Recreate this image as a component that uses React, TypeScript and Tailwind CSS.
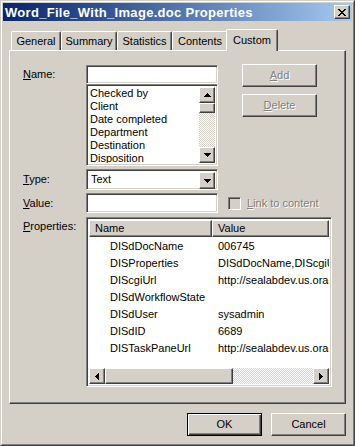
import React from 'react';

// Classic Windows bevels, written out in full so Tailwind picks them up.
const raised =
  'border border-t-white border-l-white border-r-[#404040] border-b-[#404040] shadow-[inset_-1px_-1px_#808080]';
const sunken =
  'border border-t-[#808080] border-l-[#808080] border-r-white border-b-white shadow-[inset_1px_1px_#404040,inset_-1px_-1px_#d4d0c8]';
const checker =
  'bg-[repeating-conic-gradient(#ffffff_0_25%,#d4d0c8_0_50%)] [background-size:2px_2px]';
const disabledText = 'text-[#808080] [text-shadow:1px_1px_0_#ffffff]';

const arrows: Record<string, { w: number; h: number; d: string }> = {
  up: { w: 7, h: 4, d: 'M3 0h1v1H3zM2 1h3v1H2zM1 2h5v1H1zM0 3h7v1H0z' },
  down: { w: 7, h: 4, d: 'M0 0h7v1H0zM1 1h5v1H1zM2 2h3v1H2zM3 3h1v1H3z' },
  left: { w: 4, h: 7, d: 'M3 0h1v7H3zM2 1h1v5H2zM1 2h1v3H1zM0 3h1v1H0z' },
  right: { w: 4, h: 7, d: 'M0 0h1v7H0zM1 1h1v5H1zM2 2h1v3H2zM3 3h1v1H3z' },
};

const Arrow = ({ dir }: { dir: 'up' | 'down' | 'left' | 'right' }) => {
  const a = arrows[dir];
  return (
    <svg width={a.w} height={a.h} viewBox={`0 0 ${a.w} ${a.h}`} shapeRendering="crispEdges">
      <path d={a.d} fill="#000" />
    </svg>
  );
};

const ScrollBtn = ({ dir, className = '' }: { dir: 'up' | 'down' | 'left' | 'right'; className?: string }) => (
  <div className={`${raised} bg-[#d4d0c8] flex items-center justify-center shrink-0 ${className}`}>
    <Arrow dir={dir} />
  </div>
);

const tabs = [
  { name: 'General', w: 'w-[50px]' },
  { name: 'Summary', w: 'w-[56px]' },
  { name: 'Statistics', w: 'w-[55px]' },
  { name: 'Contents', w: 'w-[56px]' },
];

const fieldNames = ['Checked by', 'Client', 'Date completed', 'Department', 'Destination', 'Disposition'];

const props = [
  ['DISdDocName', '006745'],
  ['DISProperties', 'DISdDocName,DIScgiUrl,DISdWorkflowState'],
  ['DIScgiUrl', 'http://sealabdev.us.oracle.com/idc/idcplg'],
  ['DISdWorkflowState', ''],
  ['DISdUser', 'sysadmin'],
  ['DISdID', '6689'],
  ['DISTaskPaneUrl', 'http://sealabdev.us.oracle.com/idc/idcplg'],
];

const Label = ({ u, rest, h = 'h-[19px]' }: { u: string; rest: string; h?: string }) => (
  <div className={`w-[63px] shrink-0 flex items-center ${h}`}>
    <span>
      <span className="underline underline-offset-[1px]">{u}</span>
      {rest}
    </span>
  </div>
);

export default function App() {
  return (
    <div className="w-[355px] h-[446px] border border-t-[#d4d0c8] border-l-[#d4d0c8] border-r-[#404040] border-b-[#404040] bg-[#d4d0c8] font-['Liberation_Sans',Arial,sans-serif] text-[11px] leading-[13px] text-black select-none">
      <div className="h-full border border-t-white border-l-white border-r-[#808080] border-b-[#808080] p-[1px] flex flex-col">
        {/* Title bar */}
        <div className="h-[18px] shrink-0 flex items-center bg-gradient-to-r from-[#0a246a] to-[#a6caf0] pl-[2px] pr-[2px]">
          <span className="flex-1 text-white font-bold text-[13px] tracking-[0.3px] whitespace-nowrap">
            Word_File_With_Image.doc Properties
          </span>
          <div className={`${raised} bg-[#d4d0c8] w-[16px] h-[14px] flex items-center justify-center`}>
            <svg width="8" height="7" viewBox="0 0 8 7" shapeRendering="crispEdges">
              <path
                d="M0 0h2v1H0zM6 0h2v1H6zM1 1h2v1H1zM5 1h2v1H5zM2 2h4v1H2zM3 3h2v1H3zM2 4h4v1H2zM1 5h2v1H1zM5 5h2v1H5zM0 6h2v1H0zM6 6h2v1H6z"
                fill="#000"
              />
            </svg>
          </div>
        </div>

        <div className="flex-1 px-[6px] pt-[8px] flex flex-col">
          {/* Tabs */}
          <div className="h-[21px] flex items-end pl-[2px] shrink-0">
            {tabs.map((t) => (
              <div
                key={t.name}
                className={`${t.w} h-[19px] border-t border-l border-r border-t-white border-l-white border-r-[#404040] shadow-[inset_-1px_0_#808080] rounded-t-[2px] flex items-center justify-center`}
              >
                {t.name}
              </div>
            ))}
            <div className="relative z-10 -ml-[2px] w-[52px] h-[22px] -mb-[1px] bg-[#d4d0c8] border-t border-l border-r border-t-white border-l-white border-r-[#404040] shadow-[inset_-1px_0_#808080] rounded-t-[2px] flex justify-center pt-[4px]">
              Custom
            </div>
          </div>

          {/* Tab panel */}
          <div className="w-[337px] h-[354px] shrink-0 border border-t-white border-l-white border-r-[#404040] border-b-[#404040] shadow-[inset_-1px_-1px_#808080] pl-[13px] pt-[14px] flex flex-col">
            {/* Name */}
            <div className="flex">
              <Label u="N" rest="ame:" />
              <div className="w-[132px] flex flex-col">
                <div className={`${sunken} h-[19px] bg-white`} />
                <div className={`${sunken} h-[82px] bg-white flex p-[2px]`}>
                  <div className="flex-1 pl-[1px] overflow-hidden">
                    {fieldNames.map((f) => (
                      <div key={f} className="h-[13px] whitespace-nowrap">
                        {f}
                      </div>
                    ))}
                  </div>
                  <div className="w-[16px] flex flex-col">
                    <ScrollBtn dir="up" className="h-[16px]" />
                    <div className={`${raised} bg-[#d4d0c8] h-[10px]`} />
                    <div className={`flex-1 ${checker}`} />
                    <ScrollBtn dir="down" className="h-[16px]" />
                  </div>
                </div>
              </div>
              <div className="ml-[24px] -mt-[1px] flex flex-col gap-[7px]">
                <div className={`${raised} w-[75px] h-[23px] flex items-center justify-center ${disabledText}`}>
                  <span>
                    <span className="underline underline-offset-[1px]">A</span>dd
                  </span>
                </div>
                <div className={`${raised} w-[75px] h-[23px] flex items-center justify-center ${disabledText}`}>
                  <span>
                    <span className="underline underline-offset-[1px]">D</span>elete
                  </span>
                </div>
              </div>
            </div>

            {/* Type */}
            <div className="flex mt-[3px]">
              <Label u="T" rest="ype:" h="h-[21px]" />
              <div className={`${sunken} w-[132px] h-[21px] bg-white flex p-[2px]`}>
                <div className="flex-1 pl-[2px] flex items-center">Text</div>
                <ScrollBtn dir="down" className="w-[16px] h-[17px]" />
              </div>
            </div>

            {/* Value */}
            <div className="flex mt-[3px] items-center">
              <Label u="V" rest="alue:" h="h-[20px]" />
              <div className={`${sunken} w-[132px] h-[20px] bg-white`} />
              <div className={`${sunken} ml-[10px] w-[13px] h-[13px] bg-[#d4d0c8]`} />
              <span className={`ml-[6px] ${disabledText}`}>
                <span className="underline underline-offset-[1px]">L</span>ink to content
              </span>
            </div>

            {/* Properties */}
            <div className="flex mt-[4px]">
              <Label u="P" rest="roperties:" />
              <div className={`${sunken} w-[246px] h-[170px] bg-white p-[2px] flex flex-col`}>
                <div className="h-[17px] flex shrink-0 overflow-hidden">
                  <div className={`${raised} bg-[#d4d0c8] w-[123px] shrink-0 pl-[5px] flex items-center`}>Name</div>
                  <div className={`${raised} bg-[#d4d0c8] flex-1 pl-[5px] flex items-center`}>Value</div>
                </div>
                <div className="flex-1 pt-[1px] overflow-hidden">
                  {props.map(([n, v]) => (
                    <div key={n} className="h-[17px] flex items-center whitespace-nowrap">
                      <div className="w-[123px] shrink-0 pl-[21px]">{n}</div>
                      <div className="pl-[6px] overflow-hidden">{v}</div>
                    </div>
                  ))}
                </div>
                <div className="h-[16px] flex shrink-0">
                  <ScrollBtn dir="left" className="w-[16px]" />
                  <div className={`${raised} bg-[#d4d0c8] w-[128px] shrink-0`} />
                  <div className={`flex-1 ${checker}`} />
                  <ScrollBtn dir="right" className="w-[16px]" />
                </div>
              </div>
            </div>
          </div>

          {/* Buttons */}
          <div className="mt-[9px] flex justify-end gap-[9px]">
            <div className="w-[75px] h-[23px] border border-black shadow-[inset_1px_1px_#ffffff,inset_-1px_-1px_#404040,inset_-2px_-2px_#808080] flex items-center justify-center">
              OK
            </div>
            <div className={`${raised} w-[75px] h-[23px] flex items-center justify-center`}>Cancel</div>
          </div>
        </div>
      </div>
    </div>
  );
}
